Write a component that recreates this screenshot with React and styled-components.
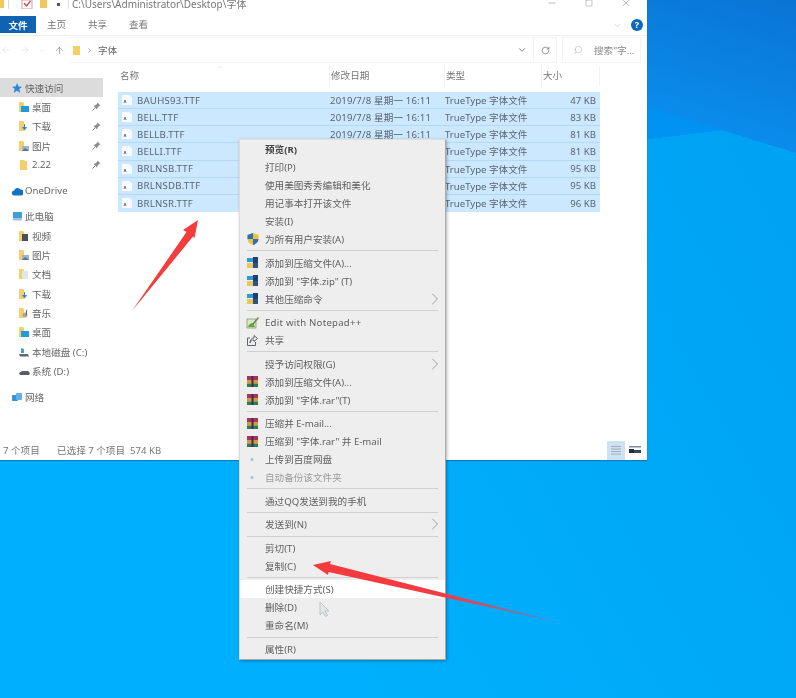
import React from "react";
import styled, { createGlobalStyle } from "styled-components";
import { ArrowUp, ArrowLeft, ArrowRight, ChevronDown, ChevronRight, ChevronUp, RotateCw, Search, Minus, Square, X } from "lucide-react";

const Global = createGlobalStyle`
  html, body { margin: 0; padding: 0; background: #00aeff; }
  * { box-sizing: border-box; }
`;

const FONT = `"Noto Sans", "Noto Sans CJK SC", sans-serif`;

const navGroups = [
  [
    { icon: "star", label: "快速访问", active: true },
    { icon: "desk", label: "桌面", sub: true, pin: true },
    { icon: "down", label: "下载", sub: true, pin: true },
    { icon: "pics", label: "图片", sub: true, pin: true },
    { icon: "folder", label: "2.22", sub: true, pin: true },
  ],
  [{ icon: "cloud", label: "OneDrive" }],
  [
    { icon: "pc", label: "此电脑" },
    { icon: "video", label: "视频", sub: true },
    { icon: "pics", label: "图片", sub: true },
    { icon: "doc", label: "文档", sub: true },
    { icon: "down", label: "下载", sub: true },
    { icon: "music", label: "音乐", sub: true },
    { icon: "desk", label: "桌面", sub: true },
    { icon: "disk", label: "本地磁盘 (C:)", sub: true },
    { icon: "drive", label: "系统 (D:)", sub: true },
  ],
  [{ icon: "net", label: "网络" }],
];

const files = [
  ["BAUHS93.TTF", "47 KB"],
  ["BELL.TTF", "83 KB"],
  ["BELLB.TTF", "81 KB"],
  ["BELLI.TTF", "81 KB"],
  ["BRLNSB.TTF", "95 KB"],
  ["BRLNSDB.TTF", "95 KB"],
  ["BRLNSR.TTF", "96 KB"],
];

const menu = [
  { label: "预览(R)", bold: true },
  { label: "打印(P)" },
  { label: "使用美图秀秀编辑和美化" },
  { label: "用记事本打开该文件" },
  { label: "安装(I)" },
  { label: "为所有用户安装(A)", icon: "shield" },
  { sep: true },
  { label: "添加到压缩文件(A)...", icon: "zip" },
  { label: "添加到 \"字体.zip\" (T)", icon: "zip" },
  { label: "其他压缩命令", icon: "zip", more: true },
  { sep: true },
  { label: "Edit with Notepad++", icon: "notepad", wide: true },
  { label: "共享", icon: "share" },
  { sep: true },
  { label: "授予访问权限(G)", more: true },
  { label: "添加到压缩文件(A)...", icon: "rar" },
  { label: "添加到 \"字体.rar\"(T)", icon: "rar" },
  { sep: true },
  { label: "压缩并 E-mail...", icon: "rar" },
  { label: "压缩到 \"字体.rar\" 并 E-mail", icon: "rar" },
  { label: "上传到百度网盘", icon: "dot" },
  { label: "自动备份该文件夹", icon: "dot", faint: true },
  { sep: true },
  { label: "通过QQ发送到我的手机" },
  { sep: true },
  { label: "发送到(N)", more: true },
  { sep: true },
  { label: "剪切(T)" },
  { label: "复制(C)" },
  { sep: true },
  { label: "创建快捷方式(S)", hover: true },
  { label: "删除(D)" },
  { label: "重命名(M)" },
  { sep: true },
  { label: "属性(R)" },
];

function NavIcon({ kind }) {
  const folder = <path d="M1 1h4l1 1v9H1z" fill="#f6cf6a" />;
  const art = {
    star: <path d="M6 1l1.5 3.4 3.6.3-2.8 2.4.9 3.6L6 8.8 2.8 10.700l.9-3.600L1 4.700l3.600-.3z" fill="#2f86d8" />,
    desk: <>{folder}<rect x="3" y="5" width="8" height="6" fill="#1f9ade" /></>,
    down: <>{folder}<path d="M7 4v3h2l-2.500 3.500L4 7h2V4z" fill="#2b84cf" /></>,
    pics: <>{folder}<rect x="4" y="6" width="7" height="5" fill="#9fb4c8" /><path d="M4 11l3-3 4 3z" fill="#51779a" /></>,
    folder: <path d="M2 1h4l1 1h2v9H2z" fill="#f6cf6a" />,
    cloud: <path d="M3.500 10.500a2.500 2.500 0 0 1-.3-5 3.500 3.500 0 0 1 6.300-1 3 3 0 0 1 .5 6z" fill="#1272c4" />,
    pc: <><rect x="2" y="2" width="9" height="6.500" fill="#3ba0dc" /><path d="M1 9.500l2-1h7l1 2H3z" fill="#a9bccb" /></>,
    video: <>{folder}<rect x="4" y="4" width="6" height="7" fill="#47505c" /></>,
    doc: <>{folder}<rect x="4" y="3" width="6" height="8" fill="#dde6ee" /></>,
    music: <>{folder}<circle cx="7" cy="8" r="2.500" fill="#a3a6a0" /><rect x="8" y="3" width="1" height="5" fill="#60686e" /></>,
    disk: <><path d="M3 2l3 1v4H3z" fill="#3ba0dc" /><path d="M1 8h9l1 2.500H2z" fill="#5d6a74" /></>,
    drive: <path d="M1 8l3-2h6l2 2-1 2H2z" fill="#565d64" />,
    net: <><rect x="1" y="4" width="6" height="6" rx="1" fill="#3a90d2" /><rect x="5" y="2" width="6" height="7" rx="1" fill="#5fb0e4" /></>,
  };
  return <svg width="12" height="12" viewBox="0 0 12 12">{art[kind]}</svg>;
}

function MenuIcon({ kind }) {
  if (kind === "shield")
    return (
      <svg width="14" height="14" viewBox="0 0 14 14">
        <path d="M7 1l5.500 2v4c0 3-2.500 5-5.500 6-3-1-5.500-3-5.500-6V3z" fill="#f0c23c" />
        <path d="M7 1v6H1.500V3zM7 7h5.500c0 3-2.500 5-5.500 6z" fill="#2a6fc0" />
      </svg>
    );
  if (kind === "zip")
    return (
      <svg width="13" height="13" viewBox="0 0 13 13">
        <rect x="1" y="2" width="6" height="4" fill="#2f9ad8" />
        <rect x="1" y="7" width="6" height="5" fill="#e6c95a" />
        <rect x="7" y="1" width="5" height="6" fill="#263d70" />
        <rect x="7" y="7" width="5" height="5" fill="#31527e" />
      </svg>
    );
  if (kind === "rar")
    return (
      <svg width="13" height="13" viewBox="0 0 13 13">
        <rect x="1" y="1" width="11" height="4" fill="#a8345c" />
        <rect x="1" y="5" width="11" height="3.500" fill="#d79a2e" />
        <rect x="1" y="8.500" width="11" height="3.500" fill="#2f7c4e" />
        <rect x="5.500" y="1" width="2" height="11" fill="#3f2c60" />
      </svg>
    );
  if (kind === "notepad")
    return (
      <svg width="13" height="13" viewBox="0 0 13 13">
        <rect x="1" y="3" width="9" height="9" fill="#d9e8c4" stroke="#7f8f70" strokeWidth=".7" />
        <path d="M2 11c1-3 3-4 5-4l2 4z" fill="#5fa63c" />
        <path d="M12 1L7 7l-1 2 2-1 5-6z" fill="#6a7c50" />
      </svg>
    );
  if (kind === "share")
    return (
      <svg width="13" height="13" viewBox="0 0 13 13" fill="none" stroke="#5d6670" strokeWidth="1">
        <path d="M4 4H1.500v7.500h8V8" />
        <path d="M8 1.500l3.500 3L8 7.500V6C6 6 4.500 7 4 9c0-3 1.500-5 4-5z" />
      </svg>
    );
  return (
    <svg width="13" height="13" viewBox="0 0 13 13">
      <circle cx="6" cy="6.500" r="1.500" fill="#8fc4ea" />
    </svg>
  );
}

function FileIcon() {
  return (
    <svg width="12" height="12" viewBox="0 0 12 12">
      <path d="M1 1h7.500L11 3.500V11H1z" fill="#f8fafc" />
      <path d="M3 9l1-3 1 3" fill="none" stroke="#58606a" strokeWidth=".8" />
    </svg>
  );
}

function Pin() {
  return (
    <svg width="9" height="9" viewBox="0 0 9 9">
      <path d="M5.500.5l3 3-1.500.5L5.500 6l-.5 1.500L1.500 4 3 3.500 5 2z" fill="#8d8d8d" />
      <path d="M3 6L.5 8.500" stroke="#8d8d8d" />
    </svg>
  );
}

export default function App() {
  return (
    <Desktop>
      <Global />
      <Window>
        <TitleBar>
          <QuickIcons>
            <svg width="40" height="9" viewBox="0 0 40 9">
              <rect x="0" y="0" width="4" height="8" fill="#f3c85a" />
              <rect x="8" y="0" width="1" height="9" fill="#d8d8d8" />
              <rect x="22" y="0" width="10" height="9" fill="#fff" stroke="#c9a0a8" />
              <path d="M24 3l2.500 3 4-5" fill="none" stroke="#d9424a" strokeWidth="1.300" />
            </svg>
            <svg width="10" height="9" viewBox="0 0 10 9"><rect x="0" y="0" width="7" height="8" fill="#f3c85a" /></svg>
            <TinyCaret />
          </QuickIcons>
          <TitlePath>C:\Users\Administrator\Desktop\字体</TitlePath>
          <WindowControls>
            <Minus size={10} strokeWidth={1} />
            <Square size={8} strokeWidth={1} />
            <X size={10} strokeWidth={1} />
          </WindowControls>
        </TitleBar>

        <Ribbon>
          <FileTab>文件</FileTab>
          <Tab>主页</Tab>
          <Tab>共享</Tab>
          <Tab>查看</Tab>
          <RibbonEnd>
            <ChevronDown size={11} strokeWidth={1} color="#aab0b6" />
            <Help>?</Help>
          </RibbonEnd>
        </Ribbon>

        <AddressRow>
          <NavButtons>
            <ArrowLeft size={10} strokeWidth={1.2} color="#d0d0d0" />
            <ArrowRight size={10} strokeWidth={1.2} color="#d0d0d0" />
            <ChevronDown size={7} strokeWidth={1.2} color="#d0d0d0" />
            <ArrowUp size={11} strokeWidth={1.2} color="#6d6d6d" />
          </NavButtons>
          <PathBox>
            <svg width="8" height="11" viewBox="0 0 8 11"><rect x="0" y="1" width="7" height="9" fill="#f6cf6a" /></svg>
            <ChevronRight size={7} strokeWidth={2} color="#666" />
            <PathText>字体</PathText>
            <PathEnd><ChevronDown size={10} strokeWidth={2} color="#666" /></PathEnd>
          </PathBox>
          <RefreshBox><RotateCw size={9} strokeWidth={1.6} color="#555" /></RefreshBox>
          <SearchBox>
            <Search size={10} strokeWidth={1} color="#999" style={{ transform: "scaleX(-1)" }} />
            <SearchText>搜索"字...</SearchText>
          </SearchBox>
        </AddressRow>

        <Body>
          <Sidebar>
            {navGroups.map((group, g) => (
              <NavGroup key={g}>
                {group.map((n, i) => (
                  <NavRow key={i} $sub={n.sub} $active={n.active}>
                    <NavIcon kind={n.icon} />
                    <NavLabel>{n.label}</NavLabel>
                    {n.pin && <PinSlot><Pin /></PinSlot>}
                  </NavRow>
                ))}
              </NavGroup>
            ))}
          </Sidebar>
          <Main>
            <CaretSlot><ChevronUp size={8} strokeWidth={1} color="#b5b5b5" /></CaretSlot>
            <ListHead>
              <HeadCell>名称</HeadCell>
              <HeadCell>修改日期</HeadCell>
              <HeadCell>类型</HeadCell>
              <HeadCell>大小</HeadCell>
            </ListHead>
            <FileList>
              {files.map(([name, size]) => (
                <FileRow key={name}>
                  <NameCell><FileIcon />{name}</NameCell>
                  <DateCell>2019/7/8 星期一 16:11</DateCell>
                  <Cell>TrueType 字体文件</Cell>
                  <SizeCell>{size}</SizeCell>
                </FileRow>
              ))}
            </FileList>
          </Main>
        </Body>

        <StatusBar>
          <StatusCount>7 个项目</StatusCount>
          <span>已选择 7 个项目&nbsp; 574 KB</span>
          <ViewButtons>
            <ViewButton $on>
              <svg width="10" height="10" viewBox="0 0 10 10" stroke="#9fb0bf"><path d="M0 1.500h10M0 4h10M0 6.500h10M0 9h10" /></svg>
            </ViewButton>
            <ViewButton>
              <svg width="12" height="10" viewBox="0 0 12 10"><rect y="1" width="12" height="1.500" fill="#7a8ca8" /><rect y="4" width="5" height="4" fill="#1c2c40" /><rect x="5" y="5" width="7" height="3" fill="#34465c" /></svg>
            </ViewButton>
          </ViewButtons>
        </StatusBar>
      </Window>

      <ContextMenu>
        {menu.map((m, i) =>
          m.sep ? (
            <Sep key={i} />
          ) : (
            <MenuRow key={i} $hover={m.hover} $bold={m.bold} $faint={m.faint} $wide={m.wide}>
              <MenuIconSlot>{m.icon && <MenuIcon kind={m.icon} />}</MenuIconSlot>
              <span>{m.label}</span>
              {m.more && <MoreSlot><ChevronRight size={20} strokeWidth={0.8} color="#777" /></MoreSlot>}
            </MenuRow>
          )
        )}
      </ContextMenu>

      <Overlay width="796" height="698" viewBox="0 0 796 698">
        <defs>
          <linearGradient id="tail" gradientUnits="userSpaceOnUse" x1="313" y1="565" x2="561" y2="623">
            <stop offset="0" stopColor="#f43a3c" />
            <stop offset=".55" stopColor="#f23c44" />
            <stop offset="1" stopColor="#b85a90" stopOpacity=".5" />
          </linearGradient>
        </defs>
        <polygon points="198,220 183,230 186.500,232 132,311 193,236.500 194.500,238" fill="#f43c3c" />
        <polygon points="313,565 331,561 330,564 561,623 328.500,572 328,575" fill="url(#tail)" />
        <path d="M320 602v13l3-3 2.500 4.500 2-1-2.500-4.500h4z" fill="#e4e6e8" stroke="#b4b8bc" strokeWidth=".8" />
      </Overlay>
    </Desktop>
  );
}

const Desktop = styled.div`
  position: relative;
  width: 796px;
  height: 698px;
  overflow: hidden;
  font-family: ${FONT};
  filter: blur(0.55px);
  background:
    linear-gradient(17deg, transparent 754px, #0a8cec 754px, #0a74d4 900px),
    linear-gradient(-7deg, transparent 72.5%, rgba(0, 130, 240, 0.5) 72.5%, rgba(0, 130, 240, 0.7) 100%),
    linear-gradient(60deg, #00b0ff 0%, #00aefc 40%, #00a0f2 100%);
`;

const Window = styled.div`
  width: 647px;
  height: 460px;
  background: #fff;
  display: flex;
  flex-direction: column;
  box-shadow: 0 1px 1px rgba(40, 80, 120, 0.5);
`;

const TitleBar = styled.div`
  height: 16px;
  display: flex;
  align-items: flex-start;
  overflow: hidden;
`;

const QuickIcons = styled.div`
  display: flex;
  width: 69px;
  gap: 0;
  border-right: 1px solid #ddd;
  height: 9px;
  position: relative;
`;

const TinyCaret = styled.i`
  display: block;
  margin: 3px 0 0 7px;
  width: 3px;
  height: 3px;
  background: #555;
`;

const TitlePath = styled.div`
  margin-left: 3px;
  font-size: 10px;
  line-height: 8px;
  color: #777;
`;

const WindowControls = styled.div`
  margin-left: auto;
  width: 84px;
  margin-right: 16px;
  display: flex;
  justify-content: space-between;
  align-items: center;
  height: 6px;
  color: #555;
`;

const Ribbon = styled.div`
  height: 20px;
  display: flex;
  align-items: flex-start;
  border-bottom: 1px solid #eee;
  font-size: 9.6px;
  color: #777;
`;

const FileTab = styled.div`
  width: 36px;
  height: 17px;
  background: #1062b2;
  color: #fff;
  font-weight: 700;
  display: flex;
  align-items: center;
  justify-content: center;
  margin-right: 11px;
`;

const Tab = styled.div`
  width: 19px;
  line-height: 18px;
  margin-right: 22px;
  white-space: nowrap;
`;

const RibbonEnd = styled.div`
  margin-left: auto;
  width: 31px;
  margin-right: 4px;
  height: 18px;
  display: flex;
  align-items: center;
  justify-content: space-between;
`;

const Help = styled.div`
  width: 12px;
  height: 12px;
  border-radius: 50%;
  background: #0a68c0;
  color: #fff;
  font-size: 9px;
  font-weight: 700;
  line-height: 12px;
  text-align: center;
`;

const AddressRow = styled.div`
  height: 26px;
  margin-top: 1px;
  display: flex;
  align-items: stretch;
  font-size: 9.6px;
  color: #777;
`;

const NavButtons = styled.div`
  width: 70px;
  padding: 0 5px 0 1px;
  display: flex;
  align-items: center;
  justify-content: space-between;
`;

const PathBox = styled.div`
  width: 463px;
  display: flex;
  align-items: center;
  padding-left: 3px;
  gap: 5px;
  border-top: 1px solid #f3f3f3;
  border-bottom: 1px solid #f3f3f3;
`;

const PathText = styled.span`
  color: #666;
`;

const PathEnd = styled.span`
  margin-left: auto;
  margin-right: 6px;
  display: flex;
`;

const RefreshBox = styled.div`
  width: 24px;
  display: flex;
  align-items: center;
  justify-content: center;
  border: 1px solid #f3f3f3;
`;

const SearchBox = styled.div`
  width: 79px;
  margin-left: 5px;
  display: flex;
  align-items: center;
  padding-left: 10px;
  gap: 11px;
  border: 1px solid #f3f3f3;
  white-space: nowrap;
  overflow: hidden;
`;

const SearchText = styled.span`
  color: #8a8a8a;
`;

const Body = styled.div`
  flex: 1;
  display: flex;
  min-height: 0;
`;

const Sidebar = styled.nav`
  width: 118px;
  padding-top: 15px;
  padding-right: 15px;
`;

const NavGroup = styled.div`
  & + & {
    margin-top: 6.5px;
  }
`;

const NavRow = styled.div`
  height: 19.3px;
  display: flex;
  align-items: center;
  gap: 2px;
  padding-left: ${(p) => (p.$sub ? "18px" : "11px")};
  background: ${(p) => (p.$active ? "#dcdcdc" : "transparent")};
  font-size: 9.6px;
  color: #666;
`;

const NavLabel = styled.span`
  white-space: nowrap;
`;

const PinSlot = styled.span`
  margin-left: auto;
  margin-right: 2px;
  display: flex;
`;

const Main = styled.main`
  position: relative;
  flex: 1;
  padding-top: 3px;
`;

const CaretSlot = styled.span`
  position: absolute;
  left: 98px;
  top: 0;
  display: flex;
`;

const COLUMNS = "212px 115px 97px 58px";

const ListHead = styled.div`
  display: grid;
  grid-template-columns: ${COLUMNS};
  height: 20px;
  font-size: 9.6px;
  color: #777;
`;

const HeadCell = styled.div`
  padding-left: 2px;
  line-height: 20px;
  margin-left: -1px;
  border-right: 1px solid #f2f2f2;
  &:first-child {
    margin-left: 0;
  }
`;

const FileList = styled.div`
  margin-top: 6px;
  width: 482px;
`;

const FileRow = styled.div`
  display: grid;
  grid-template-columns: ${COLUMNS};
  height: 17.14px;
  background: #cce8ff;
  border-bottom: 1px solid #b4d8f6;
  font-size: 9.6px;
  color: #5a6572;
  align-items: center;
  &:last-child {
    border-bottom: 0;
  }
`;

const Cell = styled.div`
  white-space: nowrap;
`;

const NameCell = styled(Cell)`
  display: flex;
  align-items: center;
  gap: 4px;
  padding-left: 3px;
  letter-spacing: 0.25px;
`;

const DateCell = styled(Cell)`
  letter-spacing: 0.15px;
`;

const SizeCell = styled(Cell)`
  text-align: right;
  padding-right: 4px;
`;

const StatusBar = styled.footer`
  height: 20px;
  display: flex;
  align-items: center;
  padding-left: 3px;
  font-size: 9.6px;
  color: #777;
`;

const StatusCount = styled.span`
  width: 54px;
`;

const ViewButtons = styled.div`
  margin-left: auto;
  margin-right: 3px;
  display: flex;
  gap: 1px;
  align-items: center;
`;

const ViewButton = styled.div`
  width: 18px;
  height: 19px;
  display: flex;
  align-items: center;
  justify-content: center;
  background: ${(p) => (p.$on ? "#cfe2f1" : "transparent")};
`;

const ContextMenu = styled.div`
  position: absolute;
  left: 239px;
  top: 139px;
  width: 207px;
  height: 521px;
  background: #eeeeee;
  border-right: 1px solid #a8a8a8;
  border-bottom: 1px solid #a8a8a8;
  border-left: 1px solid #dcdcdc;
  border-top: 1px solid #e0e0e0;
  box-shadow: 1px 1px 3px rgba(0, 0, 0, 0.3);
`;

const MenuRow = styled.div`
  height: 18px;
  display: flex;
  align-items: center;
  font-size: 9.6px;
  white-space: nowrap;
  letter-spacing: ${(p) => (p.$wide ? "0.25px" : "0")};
  font-weight: ${(p) => (p.$bold ? 700 : 400)};
  color: ${(p) => (p.$faint ? "#9a9a9a" : p.$bold ? "#444" : "#606060")};
  background: ${(p) => (p.$hover ? "#ffffff" : "transparent")};
`;

const MenuIconSlot = styled.span`
  width: 25px;
  padding-left: 6px;
  display: flex;
  flex: none;
`;

const MoreSlot = styled.span`
  margin-left: auto;
  display: flex;
`;

const Sep = styled.div`
  height: 5.55px;
  display: flex;
  align-items: center;
  margin: 0 7px 0 7px;
  &::after {
    content: "";
    flex: 1;
    height: 1px;
    background: #cfcfcf;
  }
`;

const Overlay = styled.svg`
  position: absolute;
  left: 0;
  top: 0;
  pointer-events: none;
`;
